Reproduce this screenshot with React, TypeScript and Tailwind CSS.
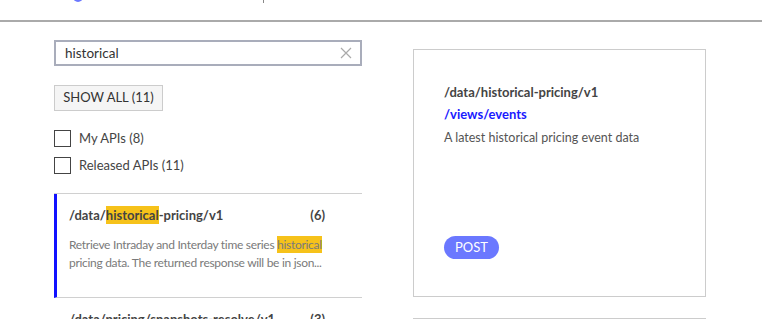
import React from 'react';

const font = { fontFamily: 'Lato, "Noto Sans", sans-serif' };

const Mark: React.FC<{ children: React.ReactNode }> = ({ children }) => (
  <span className="bg-[#f6c21a] py-[1px]">{children}</span>
);

const ApiItem: React.FC<{
  title: React.ReactNode;
  count: number;
  desc?: React.ReactNode;
  active?: boolean;
}> = ({ title, count, desc, active }) => (
  <div className={`border-b border-[#d0d0d0] ${active ? 'border-l-[3px] border-l-[#1111ff] pl-[12px]' : 'pl-[15px]'} pr-[37px] pt-[12px] h-[104px]`}>
    <div className="flex justify-between text-[13px] font-bold text-[#444] leading-[18px]">
      <span>{title}</span>
      <span>({count})</span>
    </div>
    {desc && <p className="mt-[12px] text-[12px] leading-[18px] text-[#7a7a7a] tracking-[-0.3px]">{desc}</p>}
  </div>
);

export default function App() {
  return (
    <div className="w-[762px] h-[319px] overflow-hidden bg-white" style={font}>
      <div className="h-[22px] border-b-2 border-[#aaaaaa] flex">
        <div className="ml-[73px] -mt-[8px] w-[10px] h-[10px] rounded-full bg-[#6b78ff]" />
        <div className="ml-[180px] w-px h-[3px] bg-[#888]" />
      </div>

      <div className="flex pl-[54px] pt-[18px] gap-[51px]">
        <div className="w-[308px] shrink-0">
          <div className="h-[26px] border-2 border-[#a9adbb] flex items-center justify-between pl-[9px] pr-[8px]">
            <span className="text-[13.5px] text-[#333]">historical</span>
            <svg width="12" height="12" viewBox="0 0 12 12" stroke="#aaa" strokeWidth="1.2">
              <path d="M1 1 L11 11 M11 1 L1 11" />
            </svg>
          </div>

          <button className="mt-[19px] h-[26px] w-[109px] border border-[#cccccc] bg-[#f5f5f5] text-[13px] text-[#333]">
            SHOW ALL (11)
          </button>

          <div className="mt-[19px] flex flex-col gap-[10px]">
            {['My APIs (8)', 'Released APIs (11)'].map((l) => (
              <label key={l} className="flex items-center gap-[8px] h-[17px]">
                <span className="w-[17px] h-[17px] border border-[#444] bg-white" />
                <span className="text-[13px] text-[#444]">{l}</span>
              </label>
            ))}
          </div>

          <div className="mt-[19px] border-t border-[#d0d0d0]">
            <ApiItem
              active
              title={<>/data/<Mark>historical</Mark>-pricing/v1</>}
              count={6}
              desc={<>Retrieve Intraday and Interday time series <Mark>historical</Mark> pricing data. The returned response will be in json...</>}
            />
            <ApiItem title="/data/pricing/snapshots-resolve/v1" count={3} />
          </div>
        </div>

        <div className="w-[293px] shrink-0 pt-[9px]">
          <div className="h-[248px] border border-[#cccccc] pl-[30px] pt-[33px] flex flex-col">
            <div className="text-[13px] font-bold text-[#444] leading-[18px]">/data/historical-pricing/v1</div>
            <div className="mt-[4px] text-[13px] font-bold text-[#1a1aff] leading-[18px]">/views/events</div>
            <div className="mt-[6px] text-[12.5px] text-[#555] leading-[18px]">A latest historical pricing event data</div>
            <span className="mt-[89px] self-start h-[23px] w-[55px] text-center rounded-full bg-[#6b78ff] text-white text-[13px] leading-[23px]">POST</span>
          </div>
          <div className="mt-[21px] border-t border-[#cccccc]" />
        </div>
      </div>
    </div>
  );
}
